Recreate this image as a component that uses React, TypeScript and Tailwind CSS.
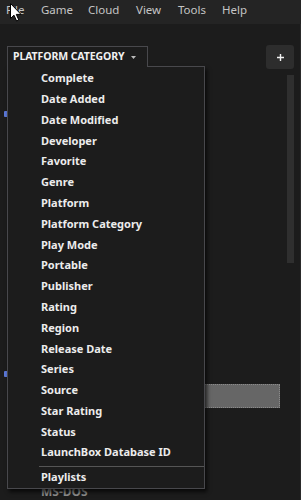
import React from "react";

const fields = [
  "Complete",
  "Date Added",
  "Date Modified",
  "Developer",
  "Favorite",
  "Genre",
  "Platform",
  "Platform Category",
  "Play Mode",
  "Portable",
  "Publisher",
  "Rating",
  "Region",
  "Release Date",
  "Series",
  "Source",
  "Star Rating",
  "Status",
  "LaunchBox Database ID",
];

function Cursor() {
  return (
    <svg
      className="absolute left-[10px] top-[3px] z-30"
      width="12"
      height="19"
      viewBox="0 0 12 19"
    >
      <path
        d="M0.5 0.5 L0.5 15.5 L4 12.2 L6.6 18 L8.8 17 L6.3 11.4 L11 11.4 Z"
        fill="#ffffff"
        stroke="#000000"
        strokeWidth="1"
        strokeLinejoin="round"
      />
    </svg>
  );
}

export default function App() {
  return (
    <div
      className="relative w-[301px] h-[500px] overflow-hidden bg-[#1c1c1c] text-white"
      style={{ fontFamily: '"Noto Sans", "Open Sans", sans-serif' }}
    >
      <Cursor />

      {/* menu bar */}
      <div className="flex h-[24px] items-center bg-[#242424] pb-[4px] pl-[6px] text-[11.5px] text-[#c4c4c4]">
        <span className="w-[35px]">File</span>
        <span className="w-[47px]">Game</span>
        <span className="w-[48px]">Cloud</span>
        <span className="w-[42px]">View</span>
        <span className="w-[44px]">Tools</span>
        <span>Help</span>
      </div>

      <div className="relative flex h-[476px] border-r border-[#2a2a2a]">
        {/* left side: list behind the dropdown */}
        <div className="relative min-w-0 flex-1">
          <div className="flex pt-[22px]">
            <div className="relative z-20 ml-[7px] flex h-[21px] w-[141px] items-center gap-[7px] border-x border-t border-[#48484c] bg-[#1c1c1c] pl-[5px] text-[10.5px] font-bold tracking-[-0.1px] text-[#f0f0f0]">
              <span>PLATFORM CATEGORY</span>
              <svg width="5" height="3" viewBox="0 0 5 3">
                <path d="M0 0 H5 L2.5 3 Z" fill="#bbbbbb" />
              </svg>
            </div>
          </div>

          {/* background rows */}
          <div className="flex flex-col">
            <div className="mt-[44px] ml-[4px] h-[6px] w-[4px] rounded-[1px] bg-[#5b78d8]" />
            <div className="mt-[254px] ml-[4px] h-[6px] w-[4px] rounded-[1px] bg-[#5b78d8]" />
            <div className="mt-[7px] ml-[40px] h-[24px] w-[240px] border border-dotted border-[#8a8a8a] bg-[#666666]" />
            <div className="mt-[75px] ml-[41px] text-[12px] font-bold text-[#8e8e8e]">MS-DOS</div>
          </div>

          {/* dropdown panel */}
          <div className="absolute left-[7px] top-[42px] z-10 w-[198px] border border-[#48484c] bg-[#1c1c1c] pt-[1px] shadow-[2px_3px_4px_rgba(0,0,0,0.7)]">
            {fields.map((f) => (
              <div
                key={f}
                className="flex h-[20.8px] items-center pl-[33px] text-[11px] font-bold text-[#ececec]"
              >
                {f}
              </div>
            ))}
            <div className="ml-[31px] mt-[3px] h-px bg-[#555555]" />
            <div className="flex h-[21px] items-center pl-[33px] text-[11px] font-bold text-[#ececec]">
              Playlists
            </div>
          </div>
        </div>

        {/* right column */}
        <div className="flex w-[35px] shrink-0 flex-col items-end pr-[6px] pt-[21px]">
          <button className="flex h-[24px] w-[28px] items-center justify-center rounded-[3px] bg-[#2d2d2d]">
            <svg width="9" height="9" viewBox="0 0 9 9">
              <path d="M4.5 1 V8 M1 4.5 H8" stroke="#f2f2f2" strokeWidth="1.4" />
            </svg>
          </button>
          <div className="mt-[6px] h-[188px] w-[7px] bg-[#2f2f2f]" />
        </div>
      </div>
    </div>
  );
}
